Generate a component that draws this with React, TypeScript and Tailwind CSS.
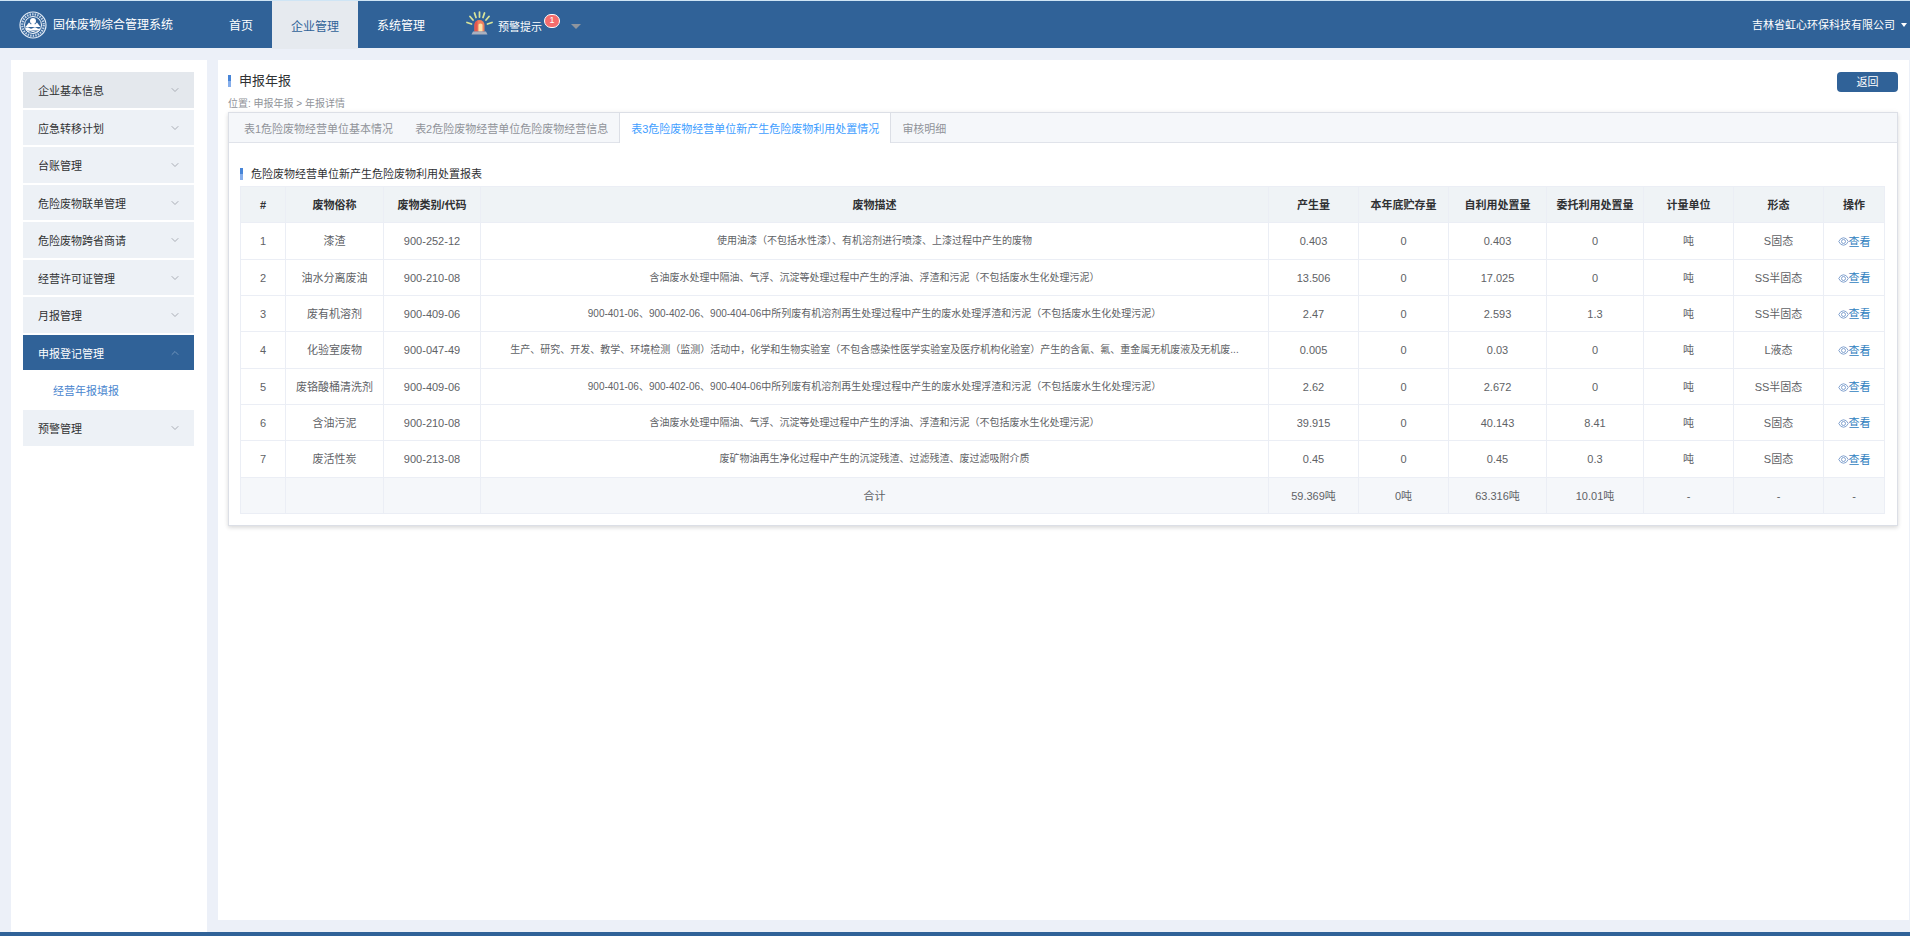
import { useState } from 'react'
import { ChevronDown, ChevronUp } from 'lucide-react'
import clsx from 'clsx'

interface WasteRow {
  name: string
  code: string
  desc: string
  produced: string
  stored: string
  selfUse: string
  entrusted: string
  form: string
}

const navItems = ['首页', '企业管理', '系统管理']

const menus: { title: string; children?: string[] }[] = [
  { title: '企业基本信息' },
  { title: '应急转移计划' },
  { title: '台账管理' },
  { title: '危险废物联单管理' },
  { title: '危险废物跨省商请' },
  { title: '经营许可证管理' },
  { title: '月报管理' },
  { title: '申报登记管理', children: ['经营年报填报'] },
  { title: '预警管理' },
]

const tabs = [
  '表1危险废物经营单位基本情况',
  '表2危险废物经营单位危险废物经营信息',
  '表3危险废物经营单位新产生危险废物利用处置情况',
  '审核明细',
]

const columns = [
  { label: '#', width: 'w-[45px]' },
  { label: '废物俗称', width: 'w-[98px]' },
  { label: '废物类别/代码', width: 'w-[97px]' },
  { label: '废物描述', width: 'w-auto' },
  { label: '产生量', width: 'w-[90px]' },
  { label: '本年底贮存量', width: 'w-[90px]' },
  { label: '自利用处置量', width: 'w-[98px]' },
  { label: '委托利用处置量', width: 'w-[97px]' },
  { label: '计量单位', width: 'w-[90px]' },
  { label: '形态', width: 'w-[90px]' },
  { label: '操作', width: 'w-[61px]' },
]

const oilDesc = '含油废水处理中隔油、气浮、沉淀等处理过程中产生的浮油、浮渣和污泥（不包括废水生化处理污泥）'
const solventDesc =
  '900-401-06、900-402-06、900-404-06中所列废有机溶剂再生处理过程中产生的废水处理浮渣和污泥（不包括废水生化处理污泥）'

const rows: WasteRow[] = [
  { name: '漆渣', code: '900-252-12', desc: '使用油漆（不包括水性漆）、有机溶剂进行喷漆、上漆过程中产生的废物', produced: '0.403', stored: '0', selfUse: '0.403', entrusted: '0', form: 'S固态' },
  { name: '油水分离废油', code: '900-210-08', desc: oilDesc, produced: '13.506', stored: '0', selfUse: '17.025', entrusted: '0', form: 'SS半固态' },
  { name: '废有机溶剂', code: '900-409-06', desc: solventDesc, produced: '2.47', stored: '0', selfUse: '2.593', entrusted: '1.3', form: 'SS半固态' },
  { name: '化验室废物', code: '900-047-49', desc: '生产、研究、开发、教学、环境检测（监测）活动中，化学和生物实验室（不包含感染性医学实验室及医疗机构化验室）产生的含氰、氟、重金属无机废液及无机废...', produced: '0.005', stored: '0', selfUse: '0.03', entrusted: '0', form: 'L液态' },
  { name: '废铬酸桶清洗剂', code: '900-409-06', desc: solventDesc, produced: '2.62', stored: '0', selfUse: '2.672', entrusted: '0', form: 'SS半固态' },
  { name: '含油污泥', code: '900-210-08', desc: oilDesc, produced: '39.915', stored: '0', selfUse: '40.143', entrusted: '8.41', form: 'S固态' },
  { name: '废活性炭', code: '900-213-08', desc: '废矿物油再生净化过程中产生的沉淀残渣、过滤残渣、废过滤吸附介质', produced: '0.45', stored: '0', selfUse: '0.45', entrusted: '0.3', form: 'S固态' },
]

const totals = ['', '', '', '合计', '59.369吨', '0吨', '63.316吨', '10.01吨', '-', '-', '-']

function Emblem() {
  return (
    <svg viewBox="0 0 56 56" className="h-7 w-7 shrink-0" fill="none" aria-hidden="true">
      <circle cx="28" cy="28" r="26" stroke="#e3ecf6" strokeWidth="2.4" />
      <circle cx="28" cy="28" r="21.5" stroke="#c3d3e6" strokeWidth="4.5" strokeDasharray="3 2.2" />
      <circle cx="28" cy="28" r="17" fill="#306298" stroke="#f2f6fb" strokeWidth="2" />
      <circle cx="28" cy="20" r="6" fill="#fff" />
      <path d="M13 32l7-9 4 4 4-5 4 5 4-4 7 9z" fill="#fff" />
      <path d="M13 34q4-3 7.500 0t7.500 0 7.500 0 7.500 0l-2 5H15z" fill="#fff" />
      <path d="M17 41q5.500-3 11 0t11 0" stroke="#fff" strokeWidth="2" />
    </svg>
  )
}

function AlarmIcon() {
  return (
    <svg viewBox="0 0 54 48" className="h-6 w-[27px] shrink-0" fill="none" aria-hidden="true">
      <g stroke="#d9e59a" strokeWidth="3.500" strokeLinecap="round">
        <path d="M27 2v10M17 4l3 9M37 4l-3 9M8 11l6 7M46 11l-6 7M2 23l9 3M52 23l-9 3" />
      </g>
      <path d="M17 41V28a10 10 0 0 1 20 0v13z" fill="#f0805f" />
      <path d="M17 41V28a10 10 0 0 1 6-9v22z" fill="#e4574d" />
      <path d="M25 41V27q4-4 8 0v14z" fill="#fde3a8" />
      <path d="M14 41h26l3 6H11z" fill="#a9b0bf" />
    </svg>
  )
}

function EyeIcon() {
  return (
    <svg viewBox="0 0 22 18" className="h-[9px] w-[11px] shrink-0" fill="none" stroke="#6f94c8" strokeWidth="1.700" aria-hidden="true">
      <path d="M1.500 9Q5 1.500 11 1.500t9.500 7.500Q17 16.500 11 16.500T1.500 9z" />
      <circle cx="11" cy="9" r="4" />
    </svg>
  )
}

function SectionBar() {
  return (
    <span className="flex h-3 w-[3px] flex-col">
      <span className="flex-1 bg-[#4785d8]" />
      <span className="flex-1 bg-[#86aeeb]" />
    </span>
  )
}

function Header({ active, onSelect }: { active: string; onSelect: (v: string) => void }) {
  return (
    <header className="flex h-12 items-stretch border-t border-[#cfe5f5] bg-[#306298] text-white">
      <div className="flex w-[210px] items-center gap-[6px] pl-[19px] pt-px">
        <Emblem />
        <h1 className="whitespace-nowrap text-xs">固体废物综合管理系统</h1>
      </div>
      <nav className="flex">
        {navItems.map((item) => (
          <button
            key={item}
            type="button"
            onClick={() => onSelect(item)}
            className={clsx('px-[19px] pt-[3px] text-xs', item === active && '-mb-px bg-[#e6eaef] text-[#306298]')}
          >
            {item}
          </button>
        ))}
      </nav>
      <button type="button" className="ml-[22px] flex items-center gap-[5px] text-[11px]">
        <span className="pb-1">
          <AlarmIcon />
        </span>
        <span className="pt-[5px]">预警提示</span>
        <span className="mb-2 -ml-[3px] flex h-[14px] w-4 items-center justify-center rounded-full border border-white bg-[#f56c6c] text-[9px] leading-none">
          1
        </span>
        <span className="ml-[6px] mt-1 border-x-[5px] border-t-[5px] border-x-transparent border-t-[#8f959e]" />
      </button>
      <button type="button" className="ml-auto flex items-center gap-[6px] pr-[3px] pt-px text-[11px]">
        吉林省虹心环保科技有限公司
        <span className="border-x-[3px] border-t-4 border-x-transparent border-t-white" />
      </button>
    </header>
  )
}

function Sidebar({ open, onToggle }: { open: string; onToggle: (v: string) => void }) {
  return (
    <aside className="w-[196px] shrink-0 bg-white pl-3 pr-[13px] pt-3">
      <ul className="flex flex-col gap-[2px] text-[11px] text-[#303133]">
        {menus.map((menu, index) => {
          const isOpen = menu.title === open && !!menu.children
          const Arrow = isOpen ? ChevronUp : ChevronDown
          return (
            <li key={menu.title}>
              <button
                type="button"
                onClick={() => onToggle(menu.title)}
                className={clsx(
                  'flex w-full items-center justify-between pl-[15px] pr-[13px]',
                  index % 2 === 0 ? 'h-9' : 'h-[35px]',
                  isOpen ? 'bg-[#306298] text-white' : index === 0 ? 'bg-[#e4e8ed]' : 'bg-[#edf1f6]',
                )}
              >
                <span className="pt-[3px]">{menu.title}</span>
                <Arrow size={12} strokeWidth={2} className={isOpen ? 'text-[#6f93ba]' : 'text-[#a9adb5]'} />
              </button>
              {isOpen &&
                menu.children?.map((child) => (
                  <a key={child} href="#report" className="flex h-[38px] items-center pl-[30px] pt-1 text-[#4a86cf]">
                    {child}
                  </a>
                ))}
            </li>
          )
        })}
      </ul>
    </aside>
  )
}

function WasteTable() {
  const cell = 'border border-[#ebeef5] p-0'
  return (
    <table className="w-full table-fixed border-collapse text-center text-[11px] leading-4 text-[#606266]">
      <thead>
        <tr className="h-9 bg-[#eff3f6] text-[#303133]">
          {columns.map((col) => (
            <th key={col.label} className={clsx(cell, col.width, 'whitespace-nowrap font-bold')}>
              {col.label}
            </th>
          ))}
        </tr>
      </thead>
      <tbody>
        {rows.map((row, index) => (
          <tr key={index} className={index % 3 === 0 ? 'h-[37px]' : 'h-9'}>
            <td className={cell}>{index + 1}</td>
            <td className={cell}>{row.name}</td>
            <td className={cell}>{row.code}</td>
            <td className={clsx(cell, 'truncate text-[10px]')}>{row.desc}</td>
            <td className={cell}>{row.produced}</td>
            <td className={cell}>{row.stored}</td>
            <td className={cell}>{row.selfUse}</td>
            <td className={cell}>{row.entrusted}</td>
            <td className={cell}>吨</td>
            <td className={cell}>{row.form}</td>
            <td className={cell}>
              <a href="#detail" className="inline-flex items-center align-middle text-[#2f7ec0]">
                <EyeIcon />
                查看
              </a>
            </td>
          </tr>
        ))}
      </tbody>
      <tfoot>
        <tr className="h-9 bg-[#f5f7fa]">
          {totals.map((value, index) => (
            <td key={index} className={cell}>
              {value}
            </td>
          ))}
        </tr>
      </tfoot>
    </table>
  )
}

export default function App() {
  const [nav, setNav] = useState('企业管理')
  const [openMenu, setOpenMenu] = useState('申报登记管理')
  const [tab, setTab] = useState(2)

  return (
    <div className="flex min-h-screen flex-col border-b-4 border-[#306298] bg-[#ecf0f8] font-['Liberation_Sans','Noto_Sans_CJK_SC',sans-serif]">
      <Header active={nav} onSelect={setNav} />
      <div className="flex flex-1 gap-[11px] pl-[11px] pr-px pt-3">
        <Sidebar open={openMenu} onToggle={setOpenMenu} />
        <main className="mb-3 min-w-0 flex-1 bg-white px-[10px] pt-3">
          <div className="flex items-start justify-between pr-px">
            <div>
              <div className="flex h-[18px] items-center gap-2">
                <SectionBar />
                <h2 className="text-[13px] leading-[18px] text-[#303133]">申报年报</h2>
              </div>
              <p className="pt-[6px] text-[10px] leading-4 text-[#909399]">位置: 申报年报 &gt; 年报详情</p>
            </div>
            <button type="button" className="h-5 w-[61px] rounded-sm bg-[#306298] text-[11px] leading-none text-white">
              返回
            </button>
          </div>
          <section className="mr-px border border-[#dcdfe6] bg-white shadow-[0_2px_4px_rgba(0,0,0,0.12),0_0_6px_rgba(0,0,0,0.04)]">
            <div role="tablist" className="flex h-[30px] border-b border-[#e0e3ea] bg-[#f5f7fa] pl-1 text-[11px] text-[#909399]">
              {tabs.map((label, index) => (
                <button
                  key={label}
                  type="button"
                  role="tab"
                  aria-selected={index === tab}
                  onClick={() => setTab(index)}
                  className={clsx(
                    'whitespace-nowrap px-[11px] pt-[3px]',
                    index === tab && '-mb-px border-x border-[#dcdfe6] bg-white text-[#409eff]',
                  )}
                >
                  {label}
                </button>
              ))}
            </div>
            <div className="pb-[11px] pl-[11px] pr-3 pt-[23px]">
              <div className="mb-1 flex h-4 items-center gap-2">
                <SectionBar />
                <h3 className="text-[11px] leading-4 text-[#303133]">危险废物经营单位新产生危险废物利用处置报表</h3>
              </div>
              <WasteTable />
            </div>
          </section>
        </main>
      </div>
    </div>
  )
}
